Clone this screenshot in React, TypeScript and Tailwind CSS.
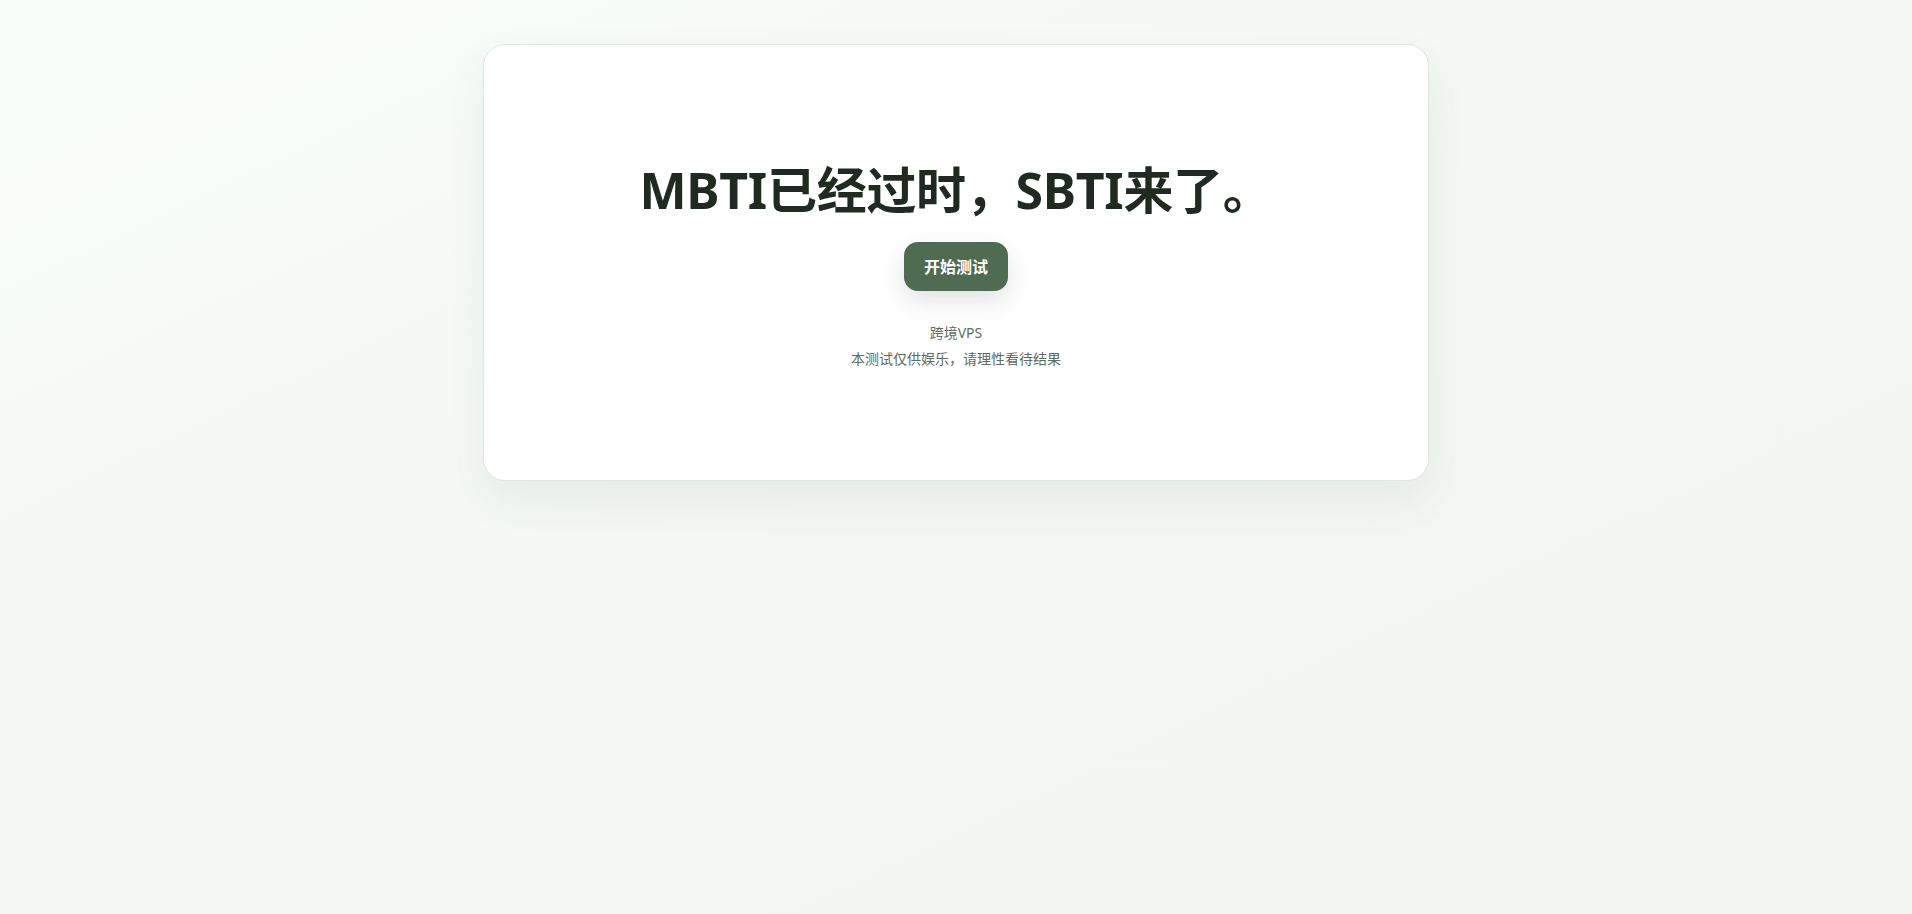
export default function App() {
  return (
    <div
      className="min-h-screen w-full bg-gradient-to-br from-[#f7fdf7] via-[#f3f7f3] to-[#f2f6f2] pt-[44px]"
      style={{ fontFamily: '"Noto Sans", "Noto Sans CJK SC", sans-serif' }}
    >
      <div className="mx-auto w-[946px] rounded-[22px] border border-[#dfe8df] bg-white pt-[115px] pb-[111px] shadow-[0_18px_40px_rgba(60,90,65,0.08)]">
        <div className="flex flex-col items-center">
          <h1 className="text-[50px] font-bold leading-[60px] tracking-[-0.3px] text-[#1f2a21]">
            MBTI已经过时，SBTI来了。
          </h1>
          <button className="mt-[22px] h-[49px] rounded-[14px] bg-[#4f6b52] px-5 text-[16px] font-bold text-white shadow-[0_10px_24px_rgba(40,60,45,0.14)]">
            开始测试
          </button>
          <div className="mt-[32px] flex flex-col items-center gap-[6px] text-[14px] leading-[20px] text-[#5f6b61]">
            <p>跨境VPS</p>
            <p>本测试仅供娱乐，请理性看待结果</p>
          </div>
        </div>
      </div>
    </div>
  );
}
